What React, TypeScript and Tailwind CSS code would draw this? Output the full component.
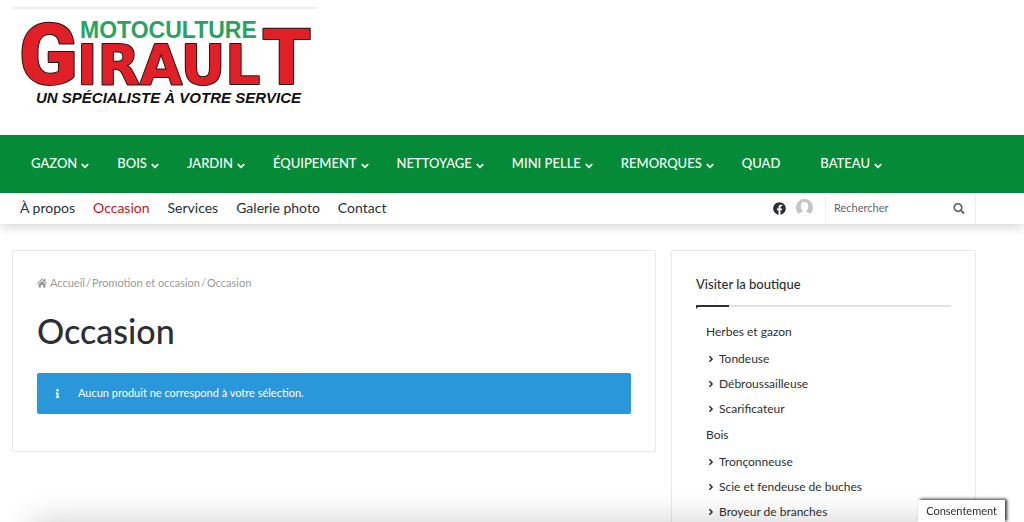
import { FaAngleRight, FaChevronDown, FaFacebook, FaInfo } from 'react-icons/fa';

const mainMenu = [
  { label: 'GAZON', sub: true },
  { label: 'BOIS', sub: true },
  { label: 'JARDIN', sub: true },
  { label: 'ÉQUIPEMENT', sub: true },
  { label: 'NETTOYAGE', sub: true },
  { label: 'MINI PELLE', sub: true },
  { label: 'REMORQUES', sub: true },
  { label: 'QUAD', sub: false },
  { label: 'BATEAU', sub: true },
];

const secondMenu = ['À propos', 'Occasion', 'Services', 'Galerie photo', 'Contact'];

const shop = [
  { title: 'Herbes et gazon', items: ['Tondeuse', 'Débroussailleuse', 'Scarificateur'] },
  { title: 'Bois', items: ['Tronçonneuse', 'Scie et fendeuse de buches', 'Broyeur de branches'] },
];

export default function App() {
  return (
    <div className="min-h-screen bg-white font-['Lato','Open_Sans',sans-serif] text-[#2c2f34]">
      <header>
        <div className="pl-3 pt-[7px] pb-5">
          <a href="#" aria-label="Motoculture Girault" className="block w-[305px] border-t-2 border-[#eeeeee]">
            <Logo />
          </a>
        </div>

        {/* Main menu */}
        <nav className="relative z-10 bg-[#058a37]">
          <ul className="flex h-[58px] items-center pl-[17px]">
            {mainMenu.map((item) => (
              <li key={item.label}>
                <a
                  href="#"
                  className={`flex items-center gap-1 pl-3.5 text-[13px] font-medium whitespace-nowrap text-white ${
                    item.sub ? 'pr-3.5' : 'pr-[26px]'
                  }`}
                >
                  {item.label}
                  {item.sub && <FaChevronDown size={8} className="mt-1" stroke="#fff" strokeWidth={40} />}
                </a>
              </li>
            ))}
          </ul>
        </nav>

        <SecondBar />
      </header>

      <div className="flex items-start gap-[15px] pt-[26px] pr-12 pl-3">
        <main className="h-[202px] flex-1 rounded-xs border border-[#e8e8e8] px-6 pt-6">
          <nav className="flex items-center text-[11px] leading-4 text-[#999999]">
            <a href="#" className="flex items-center gap-[3px]">
              <HomeIcon />
              Accueil
            </a>
            <span className="px-px">/</span>
            <a href="#">Promotion et occasion</a>
            <span className="px-px">/</span>
            <span>Occasion</span>
          </nav>
          <h1 className="mt-5 text-[34px] leading-10 font-medium">Occasion</h1>
          <div className="mt-[22px] flex h-[41px] items-center rounded-xs bg-[#2a97da] pl-4 text-[11px] text-white">
            <FaInfo size={9} className="mr-4" />
            Aucun produit ne correspond à votre sélection.
          </div>
        </main>

        <aside className="w-[305px] rounded-xs border border-[#e8e8e8] px-6 pt-6">
          <h2 className="text-[13px] leading-[18px] font-medium">Visiter la boutique</h2>
          <div className="mt-3 h-0.5 bg-[#e2e2e2]">
            <div className="h-0.5 w-[33px] bg-[#2c2f34]" />
            <div className="size-0 border-t-2 border-r-2 border-t-[#2c2f34] border-r-transparent" />
          </div>
          <div className="mt-[11px] pl-2.5 text-xs">
            {shop.map((group) => (
              <div key={group.title}>
                <h3 className="leading-7">{group.title}</h3>
                <ul>
                  {group.items.map((name) => (
                    <li key={name}>
                      <a href="#" className="flex items-center gap-[3px] leading-[25px]">
                        <FaAngleRight size={10} />
                        {name}
                      </a>
                    </li>
                  ))}
                </ul>
              </div>
            ))}
          </div>
        </aside>
      </div>

      {/* Consent bar, folded under the window */}
      <div className="pointer-events-none fixed inset-x-8 top-full h-10 shadow-[0_0_32px_rgba(0,0,0,0.2)]" />
      <button className="fixed right-[19px] bottom-0 h-[22px] bg-white px-2 text-[11px] shadow-[2px_-1px_3px_0px_#333333]">
        Consentement
      </button>
    </div>
  );
}

function SecondBar() {
  return (
    <div className="flex h-[31px] items-center justify-between pr-12 pl-5 shadow-[0_3px_12px_rgba(0,0,0,0.16)]">
      <ul className="flex gap-[18px] pb-0.5 text-sm">
        {secondMenu.map((label) => (
          <li key={label}>
            <a href="#" className={label === 'Occasion' ? 'text-[#d0121b]' : ''}>
              {label}
            </a>
          </li>
        ))}
      </ul>
      <div className="flex h-full items-center">
        <a href="#" aria-label="Facebook" className="mr-2.5">
          <FaFacebook size={13} />
        </a>
        <a href="#" aria-label="Connexion" className="mr-3">
          <Avatar />
        </a>
        <form className="flex h-full w-[151px] items-center border-x border-[#eeeeee] pr-2.5 pl-2">
          <input
            type="text"
            aria-label="Rechercher"
            placeholder="Rechercher"
            className="min-w-0 flex-1 text-[11px] outline-none placeholder:text-[#666666]"
          />
          <button type="button" aria-label="Lancer la recherche" className="text-[#666666]">
            <SearchIcon />
          </button>
        </form>
      </div>
    </div>
  );
}

function HomeIcon() {
  return (
    <svg width="10" height="10" viewBox="0 0 20 20" fill="currentColor">
      <path d="M10 1 0 10l1.500 1.700L10 4.200l8.500 7.500L20 10l-3-2.700V2h-3v2.600z" />
      <path d="M10 6 3 12v7h5v-5h4v5h5v-7z" />
    </svg>
  );
}

function SearchIcon() {
  return (
    <svg width="12" height="12" viewBox="0 0 12 12" fill="none" stroke="currentColor" strokeWidth="1.700">
      <circle cx="5" cy="4.500" r="3.800" />
      <path d="m7.800 7.300 3.300 3.300" strokeWidth="2" />
    </svg>
  );
}

function Avatar() {
  return (
    <svg width="17" height="17" viewBox="0 0 17 17" className="-mt-0.5">
      <clipPath id="avatar">
        <circle cx="8.5" cy="8.5" r="8.5" />
      </clipPath>
      <g clipPath="url(#avatar)">
        <rect width="17" height="17" fill="#c4c4c4" />
        <ellipse cx="8.5" cy="7.5" rx="3.7" ry="4.4" fill="#fff" />
        <path d="M6.5 10h4v3l4 1.5V17h-12v-2.500l4-1.500z" fill="#fff" />
      </g>
    </svg>
  );
}

function Logo() {
  return (
    <svg width="305" height="106" viewBox="12 9 305 106" className="overflow-visible">
      <text x="80" y="38" fontFamily="Liberation Sans" fontWeight="700" fontSize="23" fill="#27a463">
        MOTOCULTURE
      </text>
      <g fill="#e01f26" stroke="#1a1a1a" strokeWidth="2" strokeLinejoin="round" paintOrder="stroke">
        <text x="19" y="84" fontFamily="Roboto" fontWeight="900" fontSize="86">
          G
        </text>
        <text x="77" y="84" fontFamily="DejaVu Sans" fontWeight="700" fontSize="55">
          IRAUL
        </text>
        <text x="262" y="84" fontFamily="Roboto" fontWeight="900" fontSize="78">
          T
        </text>
      </g>
      <text
        x="36"
        y="103"
        fontFamily="Liberation Sans"
        fontWeight="700"
        fontStyle="italic"
        fontSize="15"
        fill="#111"
      >
        UN SPÉCIALISTE À VOTRE SERVICE
      </text>
    </svg>
  );
}
